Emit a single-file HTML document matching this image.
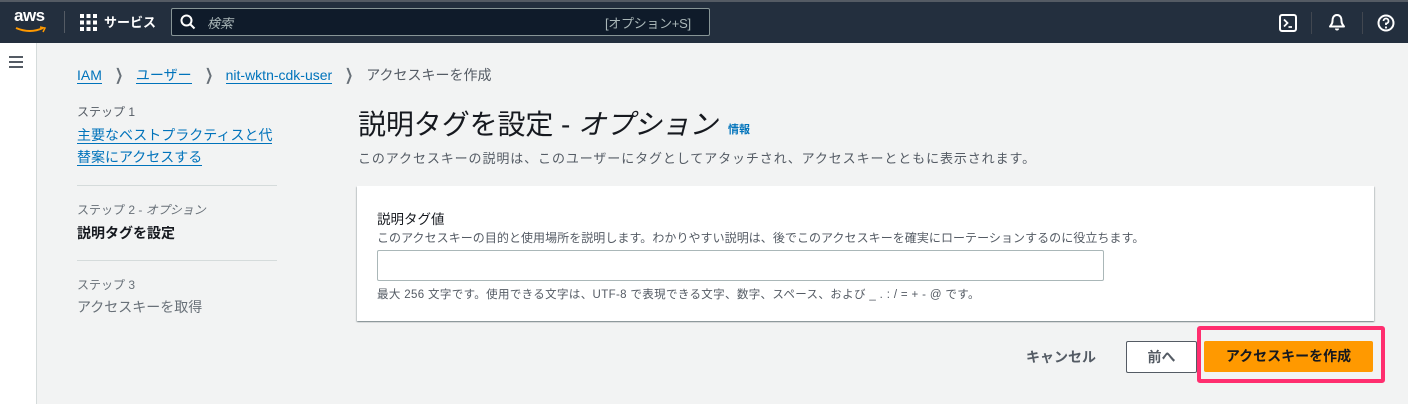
<!DOCTYPE html>
<html><head><meta charset="utf-8"><style>
*{margin:0;padding:0;box-sizing:border-box}
body{width:1408px;height:404px;overflow:hidden;background:#f2f3f3;font-family:"Liberation Sans","Noto Sans CJK JP",sans-serif;position:relative;color:#16191f}
.a{position:absolute;white-space:nowrap}
.nav{position:absolute;left:0;top:0;width:1408px;height:43px;background:#232f3e;border-top:2px solid #545b64}
.side{position:absolute;left:0;top:43px;width:37px;height:361px;background:#fff;border-right:1px solid #d5dbdb}
a,.lk{color:#0073bb;text-decoration:none;border-bottom:1px solid #0073bb}
.card{position:absolute;left:357px;top:186px;width:1017px;height:135px;background:#fff;box-shadow:0 1px 1px rgba(0,28,36,.3),1px 1px 1px rgba(0,28,36,.15),-1px 1px 1px rgba(0,28,36,.15)}
.ch{display:inline-block;width:18px;text-align:center;color:#687078;margin:0 8px;font-size:16px;transform:scaleX(.6)}
</style></head><body>
<div class="nav">
 <div class="a" style="left:14px;top:4px;color:#fff;font-size:17px;font-weight:bold;letter-spacing:-0.5px">aws</div>
 <svg class="a" style="left:15px;top:24px" width="32" height="8"><path d="M1 2 Q15 8 28 2" stroke="#f90" stroke-width="2" fill="none"/><path d="M25 1 L30 2 L28 6" stroke="#f90" stroke-width="1.5" fill="none"/></svg>
 <div class="a" style="left:64px;top:9px;width:1px;height:22px;background:#545b64"></div>
 <svg class="a" style="left:80px;top:12px" width="17" height="17" fill="#fff"><rect x="0" y="0" width="4" height="4"/><rect x="6.5" y="0" width="4" height="4"/><rect x="13" y="0" width="4" height="4"/><rect x="0" y="6.5" width="4" height="4"/><rect x="6.5" y="6.5" width="4" height="4"/><rect x="13" y="6.5" width="4" height="4"/><rect x="0" y="13" width="4" height="4"/><rect x="6.5" y="13" width="4" height="4"/><rect x="13" y="13" width="4" height="4"/></svg>
 <div class="a" style="left:104px;top:10px;color:#fff;font-size:13px;font-weight:bold">サービス</div>
 <div class="a" style="left:171px;top:6px;width:539px;height:28px;background:#0f1b2a;border:1px solid #879596;border-radius:2px"></div>
 <svg class="a" style="left:180px;top:12px" width="16" height="16"><circle cx="6.5" cy="6.5" r="5" stroke="#fff" stroke-width="2" fill="none"/><path d="M10 10 L14.5 14.5" stroke="#fff" stroke-width="2"/></svg>
 <div class="a" style="left:207px;top:11px;color:#aab7b8;font-size:13px;font-style:italic">検索</div>
 <div class="a" style="left:605px;top:11px;color:#aab7b8;font-size:13px;letter-spacing:-0.3px">[オプション+S]</div>
 <svg class="a" style="left:1279px;top:12px" width="18" height="18"><rect x="1" y="1" width="16" height="16" rx="2" stroke="#fff" stroke-width="2" fill="none"/><path d="M5 5.5 L8.5 9 L5 12.5 M9.5 13 H13" stroke="#fff" stroke-width="1.8" fill="none"/></svg>
 <div class="a" style="left:1311px;top:10px;width:1px;height:22px;background:#414750"></div>
 <svg class="a" style="left:1328px;top:11px" width="18" height="19"><path d="M9 2 C5 2 4.5 6 4.5 8 C4.5 11 3 12 2 13.5 H16 C15 12 13.5 11 13.5 8 C13.5 6 13 2 9 2Z" stroke="#fff" stroke-width="2" fill="none" stroke-linejoin="round"/><path d="M7 15.5 A2 2 0 0 0 11 15.5" fill="#fff"/></svg>
 <div class="a" style="left:1362px;top:10px;width:1px;height:22px;background:#414750"></div>
 <svg class="a" style="left:1377px;top:12px" width="18" height="18"><circle cx="9" cy="9" r="7.5" stroke="#fff" stroke-width="2" fill="none"/><path d="M6.5 7 A2.5 2.5 0 1 1 9 9.5 V11" stroke="#fff" stroke-width="1.8" fill="none"/><circle cx="9" cy="13.5" r="1.1" fill="#fff"/></svg>
</div>
<div class="side"></div>
<svg class="a" style="left:9px;top:56px" width="16" height="14" fill="#545b64"><rect y="0" width="14" height="2"/><rect y="5" width="14" height="2"/><rect y="10" width="14" height="2"/></svg>

<div class="a" style="left:77px;top:65px;font-size:14px;line-height:20px">
<a>IAM</a><span class="ch">❯</span><a>ユーザー</a><span class="ch">❯</span><a>nit-wktn-cdk-user</a><span class="ch">❯</span><span style="color:#545b64">アクセスキーを作成</span>
</div>

<div class="a" style="left:77px;top:103px;font-size:12px;color:#545b64">ステップ 1</div>
<div class="a" style="left:77px;top:124px;font-size:14px;line-height:22px;color:#0073bb"><span class="lk">主要なベストプラクティスと代</span><br><span class="lk">替案にアクセスする</span></div>
<div class="a" style="left:77px;top:185px;width:200px;height:1px;background:#d5dbdb"></div>
<div class="a" style="left:77px;top:201px;font-size:12px;color:#687078">ステップ 2 - <i>オプション</i></div>
<div class="a" style="left:77px;top:223px;font-size:14px;font-weight:bold">説明タグを設定</div>
<div class="a" style="left:77px;top:260px;width:200px;height:1px;background:#d5dbdb"></div>
<div class="a" style="left:77px;top:276px;font-size:12px;color:#687078">ステップ 3</div>
<div class="a" style="left:77px;top:297px;font-size:14px;color:#687078">アクセスキーを取得</div>

<div class="a" style="left:358px;top:103px;font-size:28px;letter-spacing:-0.1px">説明タグを設定 - <i>オプション</i></div>
<div class="a" style="left:728px;top:121px;font-size:11px;font-weight:bold;color:#0073bb">情報</div>
<div class="a" style="left:358px;top:148px;font-size:13px;letter-spacing:0.9px;color:#545b64">このアクセスキーの説明は、このユーザーにタグとしてアタッチされ、アクセスキーとともに表示されます。</div>

<div class="card"></div>
<div class="a" style="left:377px;top:208px;font-size:13.5px;color:#16191f">説明タグ値</div>
<div class="a" style="left:377px;top:229px;font-size:12px;letter-spacing:0.05px;color:#545b64">このアクセスキーの目的と使用場所を説明します。わかりやすい説明は、後でこのアクセスキーを確実にローテーションするのに役立ちます。</div>
<div class="a" style="left:377px;top:250px;width:727px;height:31px;background:#fff;border:1px solid #aab7b8;border-radius:2px"></div>
<div class="a" style="left:377px;top:286px;font-size:11.5px;letter-spacing:0.35px;color:#545b64">最大 256 文字です。使用できる文字は、UTF-8 で表現できる文字、数字、スペース、および _ . : / = + - @ です。</div>

<div class="a" style="left:1026px;top:347px;font-size:14px;font-weight:bold;color:#545b64">キャンセル</div>
<div class="a" style="left:1126px;top:341px;width:71px;height:32px;background:#fff;border:1px solid #545b64;border-radius:2px;font-size:14px;font-weight:bold;color:#545b64;text-align:center;line-height:30px">前へ</div>
<div class="a" style="left:1197px;top:326px;width:188px;height:57px;border:4px solid #ff2e6f;border-radius:3px"></div>
<div class="a" style="left:1204px;top:341px;width:169px;height:31px;background:#ff9900;border-radius:2px;font-size:14px;font-weight:bold;color:#16191f;text-align:center;line-height:31px">アクセスキーを作成</div>
</body></html>
